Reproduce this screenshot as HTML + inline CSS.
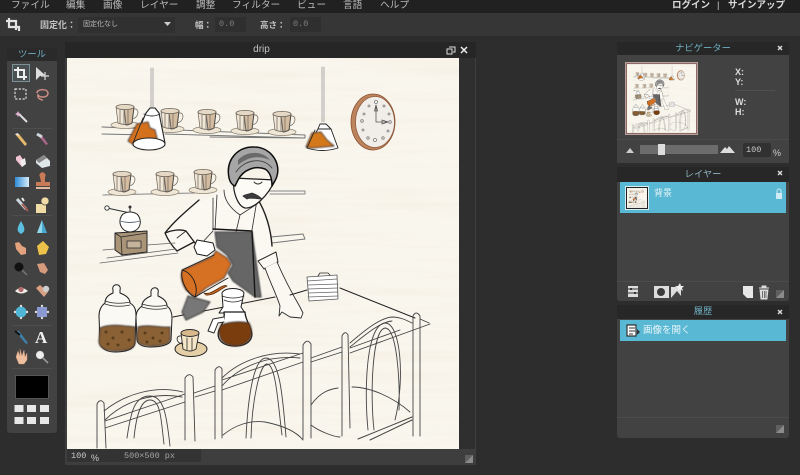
<!DOCTYPE html>
<html lang="ja"><head><meta charset="utf-8"><title>drip</title>
<style>
html,body{margin:0;padding:0;background:#2d2d2d;width:800px;height:475px;overflow:hidden}
body{position:relative;font-family:"Liberation Sans","Noto Sans CJK JP",sans-serif;color:#ccc}
.b{position:absolute}
.t{position:absolute;white-space:nowrap;line-height:1}
.m{font-size:9.700px;line-height:13px;height:13px;color:#b9b9b9;top:-1px}
.h{font-size:9.300px;color:#6fb0c2;text-align:center}
svg{position:absolute;left:0;top:0}
</style></head><body>
<div class="b" style="left:0;top:0;width:800px;height:13px;background:#212121"></div>
<div class="b" style="left:0;top:13px;width:800px;height:23px;background:#363636"></div>
<div class="b" style="left:78px;top:17px;width:97px;height:16px;background:#303030"></div>
<div class="b" style="left:215px;top:17px;width:31px;height:15px;background:#2f2f2f"></div>
<div class="b" style="left:290px;top:17px;width:31px;height:15px;background:#2f2f2f"></div>

<!-- tool panel -->
<div class="b" style="left:7px;top:48px;width:50px;height:14px;background:#2a2a2a"></div>
<div class="b" style="left:7px;top:61px;width:50px;height:372px;background:#424242;border-radius:0 0 3px 3px"></div>
<div class="b" style="left:12px;top:64px;width:18px;height:18px;border:1px solid #7b9198;box-sizing:border-box;background:#4b5152"></div>
<div class="b" style="left:12px;top:128px;width:40px;height:1px;background:#4d4d4d"></div>
<div class="b" style="left:12px;top:215px;width:40px;height:1px;background:#4d4d4d"></div>
<div class="b" style="left:12px;top:325px;width:40px;height:1px;background:#4d4d4d"></div>
<div class="b" style="left:12px;top:368px;width:40px;height:1px;background:#4d4d4d"></div>
<div class="b" style="left:15px;top:375px;width:34px;height:24px;background:#000;border:1px solid #555;box-sizing:border-box"></div>

<!-- document window -->
<div class="b" style="left:65px;top:42px;width:411px;height:16px;background:#262626"></div>
<div class="b" style="left:65px;top:58px;width:411px;height:407px;background:#3e3e3e"></div>
<div class="b" style="left:459px;top:58px;width:16px;height:391px;background:#2f2f2f"></div>
<div class="b" style="left:67px;top:449px;width:134px;height:13px;background:#333"></div>

<!-- navigator -->
<div class="b" style="left:617px;top:42px;width:172px;height:14px;background:#272727"></div>
<div class="b" style="left:617px;top:55px;width:172px;height:108px;background:#424242"></div>
<div class="b" style="left:617px;top:139px;width:172px;height:1px;background:#4b4b4b"></div>
<div class="b" style="left:625px;top:62px;width:73px;height:73px;background:#8d6a66;border:1px solid #b7a09c;box-sizing:border-box"></div>
<div class="b" style="left:735px;top:90px;width:40px;height:1px;background:#4f4f4f"></div>
<div class="b" style="left:640px;top:145px;width:78px;height:9px;background:#6c6c6c"></div>
<div class="b" style="left:658px;top:144px;width:7px;height:11px;background:#dcdcdc"></div>
<div class="b" style="left:743px;top:143px;width:28px;height:14px;background:#313131;border-radius:2px"></div>

<!-- layers -->
<div class="b" style="left:617px;top:167px;width:172px;height:15px;background:#272727"></div>
<div class="b" style="left:617px;top:182px;width:172px;height:119px;background:#424242;border-radius:0 0 3px 3px"></div>
<div class="b" style="left:620px;top:182px;width:166px;height:31px;background:#59b8d3"></div>
<div class="b" style="left:625px;top:186px;width:24px;height:24px;background:#222;border:1px solid #d6eef4;box-sizing:border-box"></div>
<div class="b" style="left:617px;top:281px;width:172px;height:1px;background:#4c4c4c"></div>

<!-- history -->
<div class="b" style="left:617px;top:305px;width:172px;height:15px;background:#272727"></div>
<div class="b" style="left:617px;top:319px;width:172px;height:119px;background:#424242;border-radius:0 0 3px 3px"></div>
<div class="b" style="left:620px;top:320px;width:166px;height:21px;background:#59b8d3"></div>
<div class="b" style="left:617px;top:417px;width:172px;height:1px;background:#4c4c4c"></div>

<svg width="800" height="475" viewBox="0 0 800 475" xmlns="http://www.w3.org/2000/svg">
<defs>
<filter id="wood" x="0" y="0" width="100%" height="100%">
<feTurbulence type="fractalNoise" baseFrequency="0.006 0.13" numOctaves="3" seed="4"/>
<feColorMatrix type="matrix" values="0 0 0 0 .85  0 0 0 0 .76  0 0 0 0 .60  1.4 0 0 0 -.6"/>
</filter>
<filter id="soft"><feGaussianBlur stdDeviation=".35"/></filter>
<filter id="wash"><feGaussianBlur stdDeviation=".8"/></filter>

<g id="cup">
<ellipse cx="0" cy="10" rx="14" ry="3.5" fill="#efe6d6" stroke="#8a8070" stroke-width=".7"/>
<path d="M-9,-8 L-7,8 Q0,11 7,8 L9,-8Z" fill="#f0e6d6" stroke="#6a6258" stroke-width=".7"/>
<path d="M-1,-7 L9,-8 L7,8 Q4,10 1,10Z" fill="#c9ab8b" opacity=".7"/>
<ellipse cx="0" cy="-8" rx="9" ry="2.6" fill="#e5d8c4" stroke="#6a6258" stroke-width=".8"/>
<path d="M-5,-5V8M-1,-5V9M3,-5V9M9,-6C15,-7 14,3 7,4" fill="none" stroke="#7a7268" stroke-width=".8"/>
</g>

<g id="scene">
<rect x="67" y="58" width="392" height="391" fill="#f9f6ee"/>
<rect x="67" y="58" width="392" height="391" filter="url(#wood)" opacity=".4"/>
<g fill="none" stroke="#2a2a2a" stroke-linecap="round" stroke-linejoin="round">
<!-- shelves -->
<path d="M102,127 L305,135 L305,138 L210,137 M102,134 L150,135 M165,134 L305,138" stroke="#777" stroke-width="1"/>
<path d="M103,195 L195,193 M270,191 L305,191 L305,194 L270,194" stroke="#888" stroke-width="1"/>
<path d="M271,237 L303,234 L305,239 L272,243" stroke="#777" stroke-width="1"/>
<use href="#cup" x="125" y="115"/><use href="#cup" x="170" y="119"/><use href="#cup" x="207" y="120"/>
<use href="#cup" x="245" y="121"/><use href="#cup" x="282" y="122"/>
<use href="#cup" x="122" y="182"/><use href="#cup" x="165" y="182"/><use href="#cup" x="203" y="180"/>

<!-- lamp 1 -->
<path d="M151,68V108M153,68V108" stroke="#999" stroke-width=".8"/>
<path d="M146,113 L150,108 L155,108 L159,113 L165,143 Q149,151 133,143Z" fill="#fff" stroke="#222" stroke-width="1.1"/>
<path d="M137,124 L148,122 L150,128 L155,130 L157,138 L140,141 L134,145 L128,141Z" fill="#d4711f" filter="url(#wash)"/>
<path d="M143,118 L133,143M144,114 Q152,118 160,114" stroke-width=".9"/>
<ellipse cx="149" cy="144" rx="16" ry="6" fill="#fff" stroke="#222" stroke-width="1.1"/>
<!-- lamp 2 -->
<path d="M322,67V122M324,67V122" stroke="#999" stroke-width=".8"/>
<path d="M318,129 L320,124 L326,124 L331,129 L338,148 Q322,153 307,148Z" fill="#fff" stroke="#222" stroke-width=".9"/>
<path d="M312,133 L321,132 L327,140 L334,146 L312,148 L306,147Z" fill="#d4781f" filter="url(#wash)"/>
<path d="M315,130 L307,148M318,129 H331" stroke-width=".9"/>
<!-- clock -->
<ellipse cx="373" cy="122" rx="22" ry="28" fill="#bd835c" stroke="#8a5232" stroke-width=".8"/>
<ellipse cx="375" cy="122" rx="19.500" ry="25.500" fill="#f1eee9" stroke="#8f5e40" stroke-width=".8"/>
<g fill="#fff" stroke="#777" stroke-width=".8">
<circle cx="376" cy="102" r="1.500"/><circle cx="369" cy="106" r="1"/><circle cx="364" cy="114" r="1"/><circle cx="362" cy="121" r="1.300"/><circle cx="363" cy="130" r="1"/><circle cx="368" cy="138" r="1.200"/><circle cx="375" cy="140" r="1.500"/><circle cx="383" cy="138" r="1.200"/><circle cx="388" cy="131" r="1"/><circle cx="390" cy="122" r="1.300"/><circle cx="389" cy="114" r="1"/><circle cx="384" cy="106" r="1"/></g>
<path d="M376,122V105M374.500,111 L376,105 L377.500,111Z M376,122 H388M382,120 L388,122 L382,124Z" stroke="#555" stroke-width=".8"/>

<!-- man: skin and shirt -->
<path d="M229,190 C215,195 200,200 190,210 L165,233 L177,250 L195,243 L213,232 L214,296 L256,296 L262,264 L272,250 L268,225 C262,210 258,205 257,198Z" fill="#fbf8f2" stroke="none"/>
<path d="M199,200 C190,208 175,220 165,233 C168,240 172,246 177,251 L194,242 M165,233 C172,230 180,229 186,231 L195,243" stroke="#1d1d1d" stroke-width="1.3"/>
<path d="M177,238 L186,231M200,245 L213,231" stroke-width=".8"/>
<path d="M213,198 L213,230M217,195 L215,230M224,190 C224,200 230,208 240,215 L236,232M257,200 L252,230M240,215 L257,204" stroke-width=".8"/>
<path d="M257,198 C266,212 271,230 272,246" stroke="#222" stroke-width="1.400"/>
<!-- apron wash -->
<path d="M215,232 L252,232 L261,297 L255,297 L233,281 L228,273 L233,265 L227,255 L217,247Z" fill="#666" filter="url(#wash)"/>
<path d="M213,229 L252,231 L255,297" stroke="#151515" stroke-width="1.400"/>
<!-- right arm -->
<path d="M258,261 L276,252 L278,262 L264,269Z" fill="#fbf8f2" stroke-width="1"/>
<path d="M265,268 C270,282 277,296 280,306 L279,316 L282,312 L290,317 L301,318 L303,313 L300,307 C293,295 284,278 277,262" fill="#fbf8f2" stroke-width=".9"/>
<!-- head -->
<path d="M234,178 C232,192 238,206 245,208 C254,209 268,196 275,180Z" fill="#fdfbf6" stroke="#1b1b1b" stroke-width="1.200"/>
<path d="M229,178 C225,158 240,146 254,147 C270,147 281,162 277,176 C276,180 274,182 272,186 C272,178 270,172 265,169 C255,165 243,170 238,180 L235,186 C232,185 230,182 229,178Z" fill="#a6a6a6" stroke="#111" stroke-width="1.500"/>
<path d="M236,172 C244,160 262,156 272,168" stroke="#444" stroke-width=".9"/>
<path d="M238,160 C246,151 262,150 270,160 C258,155 248,157 238,165Z" fill="#555" stroke="none" opacity=".75"/>
<path d="M254,182 Q258,186 262,182" stroke-width=".9"/>
<path d="M243,196 C246,194 250,194 252,193 C255,194 259,196 262,199 C256,199 250,197 247,199Z" fill="#3b3b3b" stroke="#333" stroke-width=".8"/>

<!-- grinder -->
<path d="M107,208 L130,213M130,213V207" stroke-width="1"/>
<circle cx="107" cy="208" r="2.200" fill="#fff" stroke-width=".9"/>
<circle cx="130" cy="207" r="1.500" fill="#333" stroke="none"/>
<path d="M123,214 Q130,210 137,214 C143,220 141,231 130,232 C120,231 117,220 123,214Z" fill="#fff" stroke-width="1"/>
<path d="M120,221 Q130,224 140,221" stroke="#567" stroke-width=".9"/>
<path d="M115,233 L147,231 L147,252 L122,255 L115,250Z" fill="#a99477" stroke="#222" stroke-width="1"/>
<path d="M115,233 L121,237 L147,233M121,237 L122,255" stroke-width=".8"/>
<rect x="127" y="241" width="14" height="7" fill="#c5b49b" stroke-width=".8"/>
<!-- counter lines -->
<path d="M103,250 L115,249M147,245 L175,243M107,258 L176,249M100,263 L178,253" stroke="#666" stroke-width=".8"/>
<path d="M173,317 L275,297M290,295 L307,290M340,288 L415,318" stroke="#222" stroke-width="1"/>
<!-- pot -->
<path d="M182,312 L188,296 L210,302 L203,312 L186,320Z" fill="#777" filter="url(#wash)"/>
<path d="M183,270 L212,257 L216,251 L227,258 L231,264 L224,278 L206,288 L195,297 L186,290 C181,282 180,274 183,270Z" fill="#d66f20" filter="url(#wash)"/>
<path d="M182,270 C180,280 187,294 195,297 C199,287 193,273 182,270ZM182,270 L214,255M195,297 L228,278" stroke="#1c1c1c" stroke-width=".9"/>
<path d="M204,293 C212,296 222,283 227,286 C220,289 214,296 206,295Z" fill="#c96a20" stroke="#5a2c08" stroke-width=".8"/>
<path d="M194,247 L197,240 L208,242 L213,243 L215,250 L207,256 L197,254Z" fill="#fff" stroke="#1a1a1a" stroke-width="1"/>
<!-- dripper + carafe -->
<path d="M222,293 C224,287 242,287 244,293 L241,307 L245,313 L219,313 L223,307Z" fill="#fff" stroke="#1c1c1c" stroke-width="1"/>
<path d="M222,296 Q233,300 244,296M224,300 Q233,304 242,300" stroke-width=".8"/>
<path d="M224,312 C225,318 222,325 219,330 C216,338 221,346 235,346 C249,346 254,338 251,330 C249,324 245,318 245,312Z" fill="#fff" stroke="#1a1a1a" stroke-width="1.300"/>
<path d="M221,325 Q235,320 249,323 C254,333 252,345 235,346 C219,345 217,333 221,325Z" fill="#7a3e10" filter="url(#wash)"/>
<path d="M224,317 L213,319 L208,331 L214,333 L218,323 L224,322" fill="#fff" stroke-width="1"/>
<!-- jars -->
<path d="M113,290 C111,283 122,283 120,290 L120,293 C128,296 130,300 130,303 C135,306 136,310 136,316 L135,343 C134,350 124,352 115,352 C105,352 100,347 100,342 L99,316 C99,310 101,306 105,303 C105,298 108,295 113,293Z" fill="#fbf9f4" stroke="#1c1c1c" stroke-width="1"/>
<path d="M105,301 Q117,305 130,302M105,304 Q117,308 130,305" stroke-width=".8"/>
<path d="M100,328 C110,323 125,326 135,327 L135,343 C134,350 124,351 115,351 C105,351 98,347 99,340Z" fill="#8a6136" filter="url(#wash)"/>
<path d="M151,293 C150,286 160,286 158,293 L158,296 C165,299 167,303 167,306 C171,309 172,313 172,318 L171,340 C170,345 160,347 150,347 C142,347 137,344 137,339 L136,318 C136,312 138,309 142,306 C142,301 146,298 151,296Z" fill="#fbf9f4" stroke="#1c1c1c" stroke-width="1"/>
<path d="M142,304 Q155,308 167,305M142,307 Q155,311 167,308" stroke-width=".8"/>
<path d="M138,327 C148,324 160,328 170,327 L170,340 C168,345 160,346 150,346 C142,346 137,343 137,338Z" fill="#8a6136" filter="url(#wash)"/>
<g fill="#4e3417" stroke="none" opacity=".8"><circle cx="106" cy="332" r="1.500"/><circle cx="113" cy="338" r="1.500"/><circle cx="122" cy="332" r="1.500"/><circle cx="129" cy="340" r="1.500"/><circle cx="118" cy="345" r="1.500"/><circle cx="108" cy="344" r="1.500"/><circle cx="145" cy="333" r="1.500"/><circle cx="153" cy="338" r="1.500"/><circle cx="162" cy="333" r="1.500"/><circle cx="147" cy="342" r="1.500"/><circle cx="160" cy="341" r="1.500"/></g>
<!-- small cup -->
<ellipse cx="191" cy="349" rx="16" ry="7.500" fill="#e5cfa6" stroke="#222" stroke-width="1"/>
<path d="M181,333 L183,349 Q190,353 196,349 L199,333" fill="#f5e6c8" stroke-width=".9"/>
<ellipse cx="190" cy="333" rx="9" ry="3.500" fill="#d9b98b" stroke-width=".9"/>
<path d="M181,336 C175,335 176,344 183,344M187,338V350M192,338V350" stroke-width=".8"/>
<!-- box stack -->
<path d="M307,277 L337,275 L338,299 L309,301Z" fill="#fff" stroke="#555" stroke-width=".8"/>
<path d="M307,281 L337,279M308,285 L338,284M308,289 L338,288M308,293 L338,292M308,297 L338,296" stroke="#666" stroke-width=".8"/>
<path d="M318,276 L320,273 L328,273 L330,275" stroke-width=".8"/>

<!-- chairs -->
<g stroke="#444" stroke-width=".9">
<path d="M97,448 V404 Q100,398 104,403 L106,448M185,440 L185,378 Q189,372 193,377 L195,441"/>
<path d="M215,439 V370 Q219,364 222,369 L222,438M303,439 V345 Q307,338 311,344 L311,438"/>
<path d="M342,436 V336 Q345,330 348,335 L350,428M413,436 V316 Q416,310 420,316 V436"/>
<path d="M104,411 C125,394 155,385 183,392M105,420 C125,400 155,392 182,397M105,421 L185,394M105,428 L185,402M194,393 L215,386M195,397 L215,391"/>
<path d="M222,378 C240,360 270,350 300,354M222,386 C240,365 270,355 300,358M222,380 L303,353M222,390 L303,362M311,358 L342,347M311,362 L342,352"/>
<path d="M350,343 C365,330 380,318 392,317 C400,317 406,320 412,323M350,347 C365,335 380,322 392,321M350,353 L430,324M350,348 L400,330M420,319 L429,323"/>
<path d="M127,438 C131,410 135,396 150,396 C165,396 167,420 170,446M134,438 C136,418 140,400 150,400 C161,400 161,420 164,444"/>
<path d="M246,438 C248,395 254,358 266,358 C280,358 283,400 286,437M251,438 C252,400 260,364 267,364 C276,364 278,405 282,435"/>
<path d="M368,430 C364,390 366,325 385,323 C401,323 405,380 395,420M374,430 C370,395 372,330 385,328 C397,328 400,380 399,410"/>
<path d="M223,435 C235,425 250,420 265,422 C280,425 295,430 303,440M311,425 C320,432 335,437 340,437M311,405 C320,392 330,389 338,388M352,387 C370,387 393,397 410,412"/>
<path d="M358,439 L412,417M370,440 L412,420" stroke-width="1"/>
</g>
</g>
</g>
</defs>

<use href="#scene" filter="url(#soft)"/>

<!-- option bar crop icon -->
<path d="M9,18 V27 H19 V31 M6,21 H16 V30" fill="none" stroke="#e3e3e3" stroke-width="2.200"/>
<path d="M164,22 H171 L167.500,26Z" fill="#ccc"/>

<!-- doc controls -->
<path d="M449,47 h6 v5 h-2 M447,49 h5 v5 h-5z" fill="none" stroke="#ddd" stroke-width="1"/>
<path d="M461,47 L467,53 M467,47 L461,53" stroke="#eee" stroke-width="1.500"/>
<path d="M465,455 h8 l-8,8z" fill="#5f5f5f"/><path d="M473,455 v8 h-8z" fill="#8b8b8b"/>

<!-- panel closes -->
<g stroke="#ddd" stroke-width="1.400"><path d="M778,46 L782,50 M782,46 L778,50M778,171 L782,175 M782,171 L778,175M778,310 L782,314 M782,310 L778,314"/></g>
<g>
<path d="M776,290 h8 l-8,8z" fill="#5f5f5f"/><path d="M784,290 v8 h-8z" fill="#8b8b8b"/>
<path d="M776,425 h8 l-8,8z" fill="#5f5f5f"/><path d="M784,425 v8 h-8z" fill="#8b8b8b"/>
</g>

<!-- navigator thumb and layer thumb -->
<svg x="627" y="64" width="69" height="69" viewBox="67 58 392 391"><use href="#scene"/></svg>
<svg x="627" y="188" width="20" height="20" viewBox="67 58 392 391"><use href="#scene"/></svg>

<!-- nav slider mountains -->
<path d="M626,153 L630,148 L634,153Z" fill="#ccc"/>
<path d="M720,153 L725,147 L727,149 L729,146 L735,153Z" fill="#ddd"/>

<!-- layer icons -->
<path d="M776,193 h6 v6 h-6z" fill="#cfeaf2"/><path d="M777,193 v-2 a2,2 0 0 1 4,0 v2" stroke="#cfeaf2" fill="none"/>
<rect x="628" y="286" width="10" height="11" fill="#ddd"/>
<path d="M628,289 h10 M628,293 h10" stroke="#333" stroke-width="1"/><rect x="630" y="288" width="2" height="2" fill="#333"/><rect x="634" y="292" width="2" height="2" fill="#333"/>
<rect x="654" y="286" width="15" height="12" fill="#ddd"/><circle cx="661" cy="292" r="4" fill="#3a3a3a"/>
<rect x="671" y="287" width="10" height="11" fill="#ddd"/><path d="M671,298 L677,291 L681,296 V298Z" fill="#444"/><path d="M680,283 l1,3 3,0 -2,2 1,3 -3,-2 -2,2 0,-3 -3,-2 3,0z" fill="#eee"/>
<path d="M743,286 H753 V298 H747 L743,294Z" fill="#e8e8e8"/>
<path d="M759,288 H769 M762,288 v-2 h4 v2 M760,290 H768 L767,299 H761Z" fill="#ddd" stroke="#ddd" stroke-width=".9"/>
<path d="M762.500,291 v7 M764.500,291 v7 M766,291 v7" stroke="#444" stroke-width=".7"/>

<!-- history icon -->
<path d="M627,325 h9 v11 h-9z" fill="#fff" stroke="#333" stroke-width="1.200"/><path d="M629,328 h6 M629,331 h6 M629,334 h4" stroke="#333"/><path d="M637,329 L640,332 L637,335Z" fill="#333"/>

<!-- TOOLS -->
<path d="M18,67 V77 H27 M14,70 H24 V80" fill="none" stroke="#eee" stroke-width="2"/>
<path d="M36,67 L36,80 L40,76 L45,75Z" fill="#ddd"/><path d="M41,76 H49 M45,72 V80" stroke="#ddd" stroke-width="1.200"/>
<rect x="15" y="89" width="11" height="10" fill="none" stroke="#ddd" stroke-dasharray="2.200 1.500" stroke-width="1.200"/>
<path d="M37,93 C37,89 47,88 48,93 C48,98 40,98 38,95 C37,99 42,100 43,100" fill="none" stroke="#c68a83" stroke-width="1.600"/>
<path d="M19,114 L27,122" stroke="#ddd" stroke-width="2"/><path d="M18,111 l1,2 2,1 -2,1 -1,2 -1,-2 -2,-1 2,-1z" fill="#e7b5d7"/>
<path d="M15,134 L19,134 L27,144 L25,146Z" fill="#e6b968"/><path d="M15,134 L18,133 L19,136Z" fill="#eee"/>
<path d="M37,134 L41,134 L48,144 L46,145Z" fill="#a68"/><path d="M37,134 L42,137" stroke="#cfd6de" stroke-width="3"/>
<path d="M16,157 L20,155 L26,164 L22,167 L16,160Z" fill="#f3c4d4"/><path d="M20,161 L25,158 L26,164 L22,167Z" fill="#eee"/>
<path d="M36,160 L44,155 L50,161 L50,166 L42,168 L36,163Z" fill="#dfe6ea"/><path d="M36,160 L44,155 L47,158 L39,163Z" fill="#888"/>
<defs><linearGradient id="g1"><stop offset="0" stop-color="#2e8bd8"/><stop offset="1" stop-color="#d8eef8"/></linearGradient></defs>
<rect x="15" y="177" width="14" height="10" fill="url(#g1)"/>
<path d="M40,177 a3,3 0 1 1 5,0 L45,182 H50 V186 H36 V182 H41Z" fill="#c97a57"/><rect x="36" y="187" width="14" height="2" fill="#e3b9a0"/>
<path d="M17,199 L26,209" stroke="#c9d6dd" stroke-width="3"/><path d="M22,204 L28,211" stroke="#a85d54" stroke-width="2"/><path d="M22,198 l2,3" stroke="#eee" stroke-width="2"/>
<rect x="36" y="204" width="10" height="9" fill="#f2dca6"/><circle cx="45" cy="201" r="4" fill="#f2dca6" stroke="#444" stroke-width=".7"/>
<path d="M21,221 C17,228 16,231 21,234 C26,231 25,228 21,221Z" fill="#5bbfe0"/>
<path d="M42,220 L37,233 L47,233Z" fill="#4aa9cf"/><path d="M42,220 L42,233 L37,233Z" fill="#90d7ec"/>
<path d="M15,243 L19,242 L22,246 L26,248 L26,254 L21,255 L16,249Z" fill="#e2a27e"/>
<path d="M37,246 L43,241 L49,247 L46,254 L39,255Z" fill="#edc24a"/>
<circle cx="19" cy="267" r="4.500" fill="#111"/><path d="M22,270 L27,275" stroke="#777" stroke-width="1.400"/>
<path d="M37,264 L44,263 L48,270 L45,274 L40,272Z" fill="#d69a7c"/>
<path d="M15,291 Q21,285 28,291 Q21,296 15,291Z" fill="#f0ece8"/><circle cx="21" cy="289.500" r="2.600" fill="#b36b6b"/>
<path d="M36,288 L40,285 L48,292 L44,297Z" fill="#d9a084"/><circle cx="46" cy="289" r="3.200" fill="#ccc"/>
<circle cx="21" cy="312" r="5.500" fill="#4fb6d6"/><circle cx="15" cy="312" r="1.200" fill="#ddd"/><circle cx="27" cy="312" r="1.200" fill="#ddd"/><circle cx="21" cy="306" r="1.200" fill="#ddd"/><circle cx="21" cy="318" r="1.200" fill="#ddd"/>
<rect x="37" y="307" width="10" height="10" fill="#8a9ad0"/><circle cx="36" cy="312" r="1.200" fill="#ddd"/><circle cx="48" cy="312" r="1.200" fill="#ddd"/><circle cx="42" cy="306" r="1.200" fill="#ddd"/><circle cx="42" cy="318" r="1.200" fill="#ddd"/>
<path d="M15,331 L19,331 L28,343 L26,344Z" fill="#3f7fa8"/><path d="M15,331 L20,335" stroke="#111" stroke-width="2"/>
<path d="M16,357 L18,351 L20,356 L20,349 L22,356 L24,350 L25,357 L27,353 L27,360 L24,364 L19,364Z" fill="#eebf9e" stroke="#cc9777" stroke-width=".4"/>
<circle cx="40" cy="355" r="3.600" fill="#eee" stroke="#ddd"/><path d="M43,358 L48,363" stroke="#999" stroke-width="1.600"/>
<g fill="#e8e8e8"><rect x="14.500" y="405" width="9" height="7"/><rect x="27" y="405" width="9" height="7"/><rect x="40" y="405" width="9" height="7"/><rect x="14.500" y="417" width="9" height="7"/><rect x="27" y="417" width="9" height="7"/><rect x="40" y="417" width="9" height="7"/></g>
</svg>

<div class="t m" style="left:11px">ファイル</div>
<div class="t m" style="left:66px">編集</div>
<div class="t m" style="left:103px">画像</div>
<div class="t m" style="left:140px">レイヤー</div>
<div class="t m" style="left:196px">調整</div>
<div class="t m" style="left:232px">フィルター</div>
<div class="t m" style="left:297px">ビュー</div>
<div class="t m" style="left:343px">言語</div>
<div class="t m" style="left:380px">ヘルプ</div>
<div class="t" style="left:672px;top:-1px;font-size:9.500px;line-height:13px;font-weight:700;color:#ddd">ログイン</div>
<div class="t" style="left:717px;top:-1px;font-size:9.500px;line-height:13px;color:#ccc">|</div>
<div class="t" style="left:728px;top:-1px;font-size:9.500px;line-height:13px;font-weight:700;color:#ddd">サインアップ</div>

<div class="t" style="left:40px;top:21px;font-size:9px;font-weight:700;color:#c4c4c4">固定化：</div>
<div class="t" style="left:83px;top:21px;font-size:7px;color:#bbb">固定化なし</div>
<div class="t" style="left:195px;top:21px;font-size:8.500px;font-weight:700;color:#c4c4c4">幅：</div>
<div class="t" style="left:219px;top:20px;font-size:8.500px;color:#7f7f7f;font-family:'Liberation Mono',monospace">0.0</div>
<div class="t" style="left:260px;top:21px;font-size:8.500px;font-weight:700;color:#c4c4c4">高さ：</div>
<div class="t" style="left:293px;top:20px;font-size:8.500px;color:#7f7f7f;font-family:'Liberation Mono',monospace">0.0</div>

<div class="t h" style="left:7px;top:50px;width:50px">ツール</div>
<div class="t" style="left:65px;top:45px;width:393px;text-align:center;font-size:10px;color:#c2c2c2">drip</div>
<div class="t" style="left:71px;top:452px;font-size:8.500px;color:#ccc;font-family:'Liberation Mono',monospace">100</div>
<div class="t" style="left:91px;top:454px;font-size:9px;color:#ccc">%</div>
<div class="t" style="left:124px;top:452px;font-size:8.500px;color:#a4a4a4;font-family:'Liberation Mono',monospace">500×500 px</div>

<div class="t h" style="left:617px;top:44px;width:172px">ナビゲーター</div>
<div class="t" style="left:735px;top:67px;font-size:9px;line-height:10px;font-weight:700;color:#ddd">X:<br>Y:</div>
<div class="t" style="left:735px;top:97px;font-size:9px;line-height:10px;font-weight:700;color:#ddd">W:<br>H:</div>
<div class="t" style="left:746px;top:146px;font-size:8.500px;color:#ccc;font-family:'Liberation Mono',monospace">100</div>
<div class="t" style="left:773px;top:149px;font-size:9px;color:#ccc">%</div>

<div class="t h" style="left:617px;top:170px;width:172px;color:#8fb4bf">レイヤー</div>
<div class="t" style="left:654px;top:189px;font-size:9px;color:#eaf6fa">背景</div>
<div class="t h" style="left:617px;top:307px;width:172px">履歴</div>
<div class="t" style="left:643px;top:326px;font-size:9.500px;color:#eaf6fa">画像を開く</div>
<div class="t" style="left:35px;top:329px;font-size:17px;font-weight:700;color:#f0f0f0;font-family:'Liberation Serif',serif">A</div>
</body></html>
